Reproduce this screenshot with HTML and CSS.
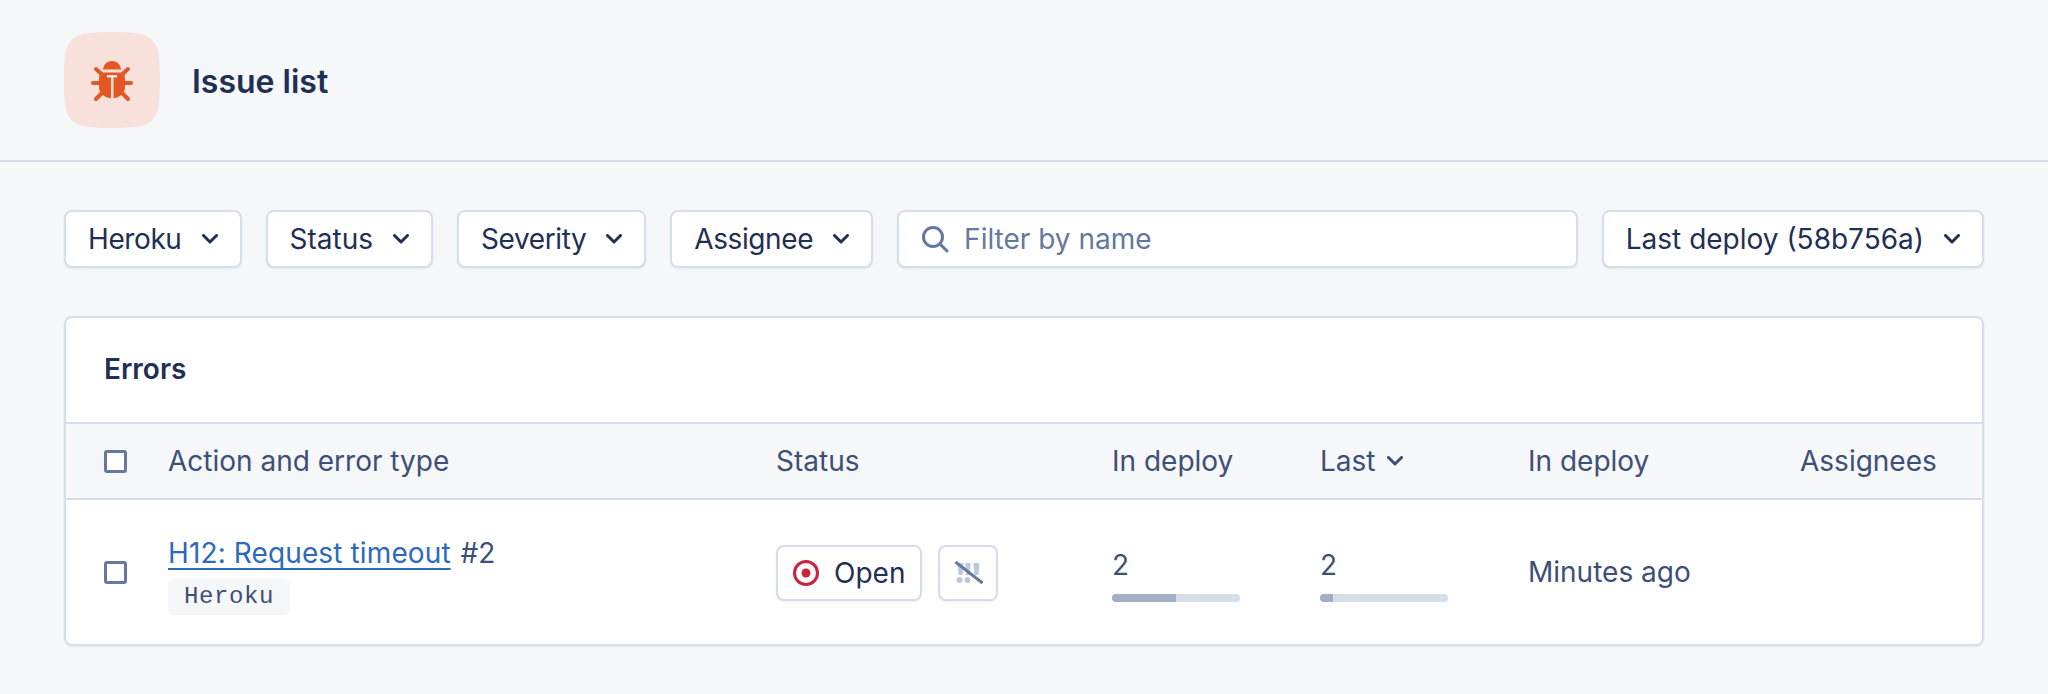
FILE: index.html
```html
<!DOCTYPE html>
<html lang="en">
<head>
<meta charset="utf-8">
<title>Issue list</title>
<link rel="stylesheet" href="styles.css">
</head>
<body>
<header class="page-header">
  <svg class="logo" viewBox="0 0 96 96" width="96" height="96" aria-hidden="true">
    <path class="logo-bg" d="M48 0C70 0 82 1 88 8C95 14 96 26 96 48C96 70 95 82 88 88C82 95 70 96 48 96C26 96 14 95 8 88C1 82 0 70 0 48C0 26 1 14 8 8C14 1 26 0 48 0Z"/>
    <path class="bug-fill" d="M39 37.500C39.500 32.500 43 29 48 29C53 29 56.500 32.500 57 37.500Z"/>
    <path class="bug-fill" d="M38 40.500H58C60 41 61 44 61 47V55C61 61 56 66 48 66.500C40 66 35 61 35 55V47C35 44 36 41 38 40.500Z"/>
    <path class="logo-bg" d="M43 43H53V45.500H49.500V67H47V45.500H43Z"/>
    <path class="bug-leg" d="M32 37L38 42.500M64 37L58 42.500M29 51H36M67 51H60M32 67L38 61M64 67L58 61"/>
  </svg>
  <h1 class="title">Issue list</h1>
</header>
<main class="content">
  <div class="filters">
    <button class="btn tight">Heroku<svg class="chev" viewBox="0 0 16 10" width="16" height="10"><path d="M1.500 1.500L8 8L14.500 1.500"/></svg></button>
    <button class="btn">Status<svg class="chev" viewBox="0 0 16 10" width="16" height="10"><path d="M1.500 1.500L8 8L14.500 1.500"/></svg></button>
    <button class="btn tight">Severity<svg class="chev" viewBox="0 0 16 10" width="16" height="10"><path d="M1.500 1.500L8 8L14.500 1.500"/></svg></button>
    <button class="btn tight">Assignee<svg class="chev" viewBox="0 0 16 10" width="16" height="10"><path d="M1.500 1.500L8 8L14.500 1.500"/></svg></button>
    <div class="search">
      <svg class="search-icon" viewBox="0 0 28 28" width="28" height="28"><circle cx="12" cy="12" r="9.500"/><path d="M19 19L26 26"/></svg>
      <span class="placeholder">Filter by name</span>
    </div>
    <button class="btn">Last deploy (58b756a)<svg class="chev" viewBox="0 0 16 10" width="16" height="10"><path d="M1.500 1.500L8 8L14.500 1.500"/></svg></button>
  </div>
  <section class="card">
    <h2 class="card-title">Errors</h2>
    <div class="row head">
      <span class="check"></span>
      <span>Action and error type</span>
      <span>Status</span>
      <span>In deploy</span>
      <span class="sort">Last<svg class="chev small" viewBox="0 0 16 10" width="16" height="10"><path d="M1.500 1.500L8 8L14.500 1.500"/></svg></span>
      <span>In deploy</span>
      <span>Assignees</span>
    </div>
    <div class="row body">
      <span class="check"></span>
      <div class="issue">
        <div class="issue-name"><a class="link" href="#">H12: Request timeout</a> #2</div>
        <code class="tag">Heroku</code>
      </div>
      <div class="status">
        <span class="chip">
          <svg class="open-icon" viewBox="0 0 26 26" width="26" height="26"><circle class="ring" cx="13" cy="13" r="11.500"/><circle class="dot" cx="13" cy="13" r="4.500"/></svg>
          Open
        </span>
        <span class="chip square">
          <svg viewBox="0 0 30 30" width="30" height="30"><path class="bang" d="M4.500 5H10.500L9.500 17H5.500ZM12.500 5H17.500L17 17H13ZM20.500 5H26.500L25.500 17H21.500Z"/><circle class="bang" cx="6.500" cy="22" r="3"/><circle class="bang" cx="14.500" cy="22" r="3"/><path class="slash" d="M2.500 4L29.500 25"/></svg>
        </span>
      </div>
      <div class="metric">2<div class="bar"><div class="fill half"></div></div></div>
      <div class="metric">2<div class="bar"><div class="fill low"></div></div></div>
      <span>Minutes ago</span>
      <span></span>
    </div>
  </section>
</main>
</body>
</html>
```
FILE: styles.css
```css
* { box-sizing: border-box; }
html, body { margin: 0; padding: 0; }
body {
  background: #f5f7f9;
  color: #1f2f55;
  font-family: Inter, "Liberation Sans", sans-serif;
  font-size: 28px;
  line-height: 32px;
  height: 694px;
  overflow: hidden;
}
.page-header {
  height: 162px;
  padding: 32px 64px 0;
  display: flex;
  align-items: flex-start;
  gap: 32px;
  border-bottom: 2px solid #d8ddea;
}
.logo { display: block; flex: none; }
.logo-bg { fill: #f7e1da; }
.bug-fill { fill: #e35825; }
.bug-leg { fill: none; stroke: #e35825; stroke-width: 4; stroke-linecap: round; }
.title {
  margin: 2px 0 0;
  font-size: 32px;
  line-height: 96px;
  font-weight: 600;
  color: #1f2f55;
}
.content { padding: 48px 64px 0; }
.filters { display: flex; gap: 24px; height: 58px; }
.btn {
  display: flex;
  align-items: center;
  gap: 20px;
  height: 58px;
  padding: 0 22px;
  background: #fff;
  border: 2px solid #d8ddea;
  border-radius: 8px;
  color: #1f2f55;
  font: inherit;
  box-shadow: 0 1px 2px rgba(31, 47, 85, .08);
  white-space: nowrap;
}
.btn.tight { letter-spacing: -.4px; }
.chev { display: block; flex: none; fill: none; stroke: #1f2f55; stroke-width: 3; stroke-linecap: round; stroke-linejoin: round; }
.chev.small { stroke: #3d4f77; }
.search {
  flex: 1;
  display: flex;
  align-items: center;
  gap: 15px;
  height: 58px;
  padding: 0 22px;
  background: #fff;
  border: 2px solid #d8ddea;
  border-radius: 8px;
  box-shadow: 0 1px 2px rgba(31, 47, 85, .08);
}
.search-icon { fill: none; stroke: #6478a0; stroke-width: 3; stroke-linecap: round; flex: none; }
.placeholder { color: #6478a0; }
.card {
  margin-top: 48px;
  height: 330px;
  background: #fff;
  border: 2px solid #d8ddea;
  border-radius: 8px;
  box-shadow: 0 1px 2px rgba(31, 47, 85, .08);
  overflow: hidden;
}
.card-title {
  margin: 0;
  height: 102px;
  padding: 0 38px;
  display: flex;
  align-items: center;
  font-size: 28px;
  font-weight: 600;
  color: #1f2f55;
}
.row {
  display: grid;
  grid-template-columns: 64px 608px 336px 208px 208px 272px 1fr;
  align-items: center;
  padding-left: 38px;
  color: #3d4f77;
}
.row.head {
  height: 78px;
  margin-top: 2px;
  background: #f5f7f9;
  border-top: 2px solid #d8ddea;
  border-bottom: 2px solid #d8ddea;
}
.row.body { height: 144px; }
.check {
  display: block;
  width: 23px;
  height: 23px;
  background: #fff;
  border: 3px solid #6478a0;
  border-radius: 3px;
}
.sort { display: flex; align-items: center; gap: 11px; }
.issue { display: flex; flex-direction: column; align-items: flex-start; gap: 10px; margin-top: 8px; }
.issue-name { line-height: 32px; }
.link {
  color: #2d69bd;
  letter-spacing: .12px;
  margin-right: 2px;
  text-decoration: underline;
  text-decoration-thickness: 2px;
  text-underline-offset: 5px;
  text-decoration-skip-ink: none;
}
.tag {
  display: block;
  padding: 0 16px;
  height: 36px;
  background: #f5f7f9;
  border-radius: 6px;
  font-family: "Liberation Mono", monospace;
  font-size: 24px;
  letter-spacing: .6px;
  line-height: 36px;
  color: #3d4f77;
}
.status { display: flex; gap: 16px; margin-top: 2px; }
.chip {
  display: flex;
  align-items: center;
  gap: 15px;
  height: 56px;
  padding: 0 15px;
  background: #fff;
  border: 2px solid #d8ddea;
  border-radius: 8px;
  box-shadow: 0 1px 2px rgba(31, 47, 85, .08);
  color: #1f2f55;
}
.chip.square { width: 60px; padding: 0 13px; justify-content: center; }
.chip svg { display: block; flex: none; }
.ring { fill: none; stroke: #c9233f; stroke-width: 3; }
.dot { fill: #c9233f; }
.bang { fill: #bfc8da; }
.slash { stroke: #6478a0; stroke-width: 3; fill: none; }
.metric { line-height: 32px; margin-top: 7px; }
.bar { margin-top: 13px; width: 128px; height: 8px; background: #d8ddea; border-radius: 4px; overflow: hidden; }
.fill { height: 8px; background: #a2adc6; }
.fill.half { width: 50%; }
.fill.low { width: 10%; }
```
